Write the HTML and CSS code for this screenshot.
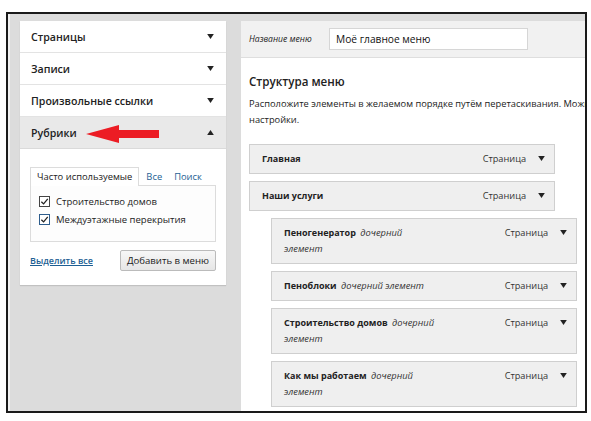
FILE: index.html
```html
<!DOCTYPE html>
<html lang="ru">
<head>
<meta charset="utf-8">
<link rel="stylesheet" href="styles.css">
</head>
<body>
<div class="frame">
  <div class="left">
    <div class="acc-row"><span>Страницы</span><svg class="tri" viewBox="0 0 8 6"><path d="M0 0H8L4 6Z"/></svg></div>
    <div class="acc-row"><span>Записи</span><svg class="tri" viewBox="0 0 8 6"><path d="M0 0H8L4 6Z"/></svg></div>
    <div class="acc-row"><span>Произвольные ссылки</span><svg class="tri" viewBox="0 0 8 6"><path d="M0 0H8L4 6Z"/></svg></div>
    <div class="acc-row open"><span>Рубрики</span><svg class="tri" viewBox="0 0 8 6"><path d="M0 6H8L4 0Z"/></svg>
      <svg class="red-arrow" viewBox="0 0 74 18"><path d="M0 9L33 0V5H73V13H33V18Z"/></svg>
    </div>
    <div class="acc-body">
      <div class="tabs">
        <span class="tab active">Часто используемые</span>
        <span class="tab">Все</span>
        <span class="tab">Поиск</span>
      </div>
      <div class="tab-panel">
        <label class="check"><span class="box"><svg viewBox="0 0 10 10"><path d="M1.5 5.2L4 7.6L8.6 2"/></svg></span>Строительство домов</label>
        <label class="check"><span class="box blue"><svg viewBox="0 0 10 10"><path d="M1.5 5.2L4 7.6L8.6 2"/></svg></span>Междуэтажные перекрытия</label>
      </div>
      <div class="actions">
        <a class="select-all">Выделить все</a>
        <span class="btn">Добавить в меню</span>
      </div>
    </div>
  </div>
  <div class="right">
    <div class="name-bar">
      <span class="name-label">Название меню</span>
      <span class="name-input">Моё главное меню</span>
    </div>
    <div class="structure">
      <h2>Структура меню</h2>
      <p>Расположите элементы в желаемом порядке путём перетаскивания. Можно также щёлкнуть на стрелку справа от элемента, чтобы открыть дополнительные<br>настройки.</p>
      <div class="items">
        <div class="item"><div class="title"><b>Главная</b></div><span class="type">Страница</span><svg class="tri" viewBox="0 0 8 6"><path d="M0 0H8L4 6Z"/></svg></div>
        <div class="item"><div class="title"><b>Наши услуги</b></div><span class="type">Страница</span><svg class="tri" viewBox="0 0 8 6"><path d="M0 0H8L4 6Z"/></svg></div>
        <div class="item child"><div class="title"><b>Пеногенератор</b> <i>дочерний<br>элемент</i></div><span class="type">Страница</span><svg class="tri" viewBox="0 0 8 6"><path d="M0 0H8L4 6Z"/></svg></div>
        <div class="item child"><div class="title"><b>Пеноблоки</b> <i>дочерний элемент</i></div><span class="type">Страница</span><svg class="tri" viewBox="0 0 8 6"><path d="M0 0H8L4 6Z"/></svg></div>
        <div class="item child"><div class="title"><b>Строительство домов</b> <i>дочерний<br>элемент</i></div><span class="type">Страница</span><svg class="tri" viewBox="0 0 8 6"><path d="M0 0H8L4 6Z"/></svg></div>
        <div class="item child"><div class="title"><b>Как мы работаем</b> <i>дочерний<br>элемент</i></div><span class="type">Страница</span><svg class="tri" viewBox="0 0 8 6"><path d="M0 0H8L4 6Z"/></svg></div>
      </div>
    </div>
  </div>
</div>
</body>
</html>
```
FILE: styles.css
```css
* { box-sizing: border-box; }
html, body { margin: 0; padding: 0; background: #fff; }
body {
  font-family: "Open Sans", "Noto Sans", sans-serif;
  color: #222;
  width: 591px;
  height: 421px;
  overflow: hidden;
}
.frame {
  margin: 12px 0 0 6px;
  width: 581px;
  height: 401px;
  border: 2px solid #1a1a1a;
  background: #dcdcdc;
  box-shadow: inset 2px 0 0 #f2f2f2;
  display: grid;
  grid-template-columns: 206px 1fr;
  column-gap: 15px;
  padding: 7px 0 0 12px;
  overflow: hidden;
}
.left {
  align-self: start;
  background: #fff;
  box-shadow: 0 1px 1px rgba(0,0,0,0.12);
}
.acc-row {
  position: relative;
  height: 32px;
  display: flex;
  align-items: center;
  justify-content: space-between;
  padding: 0 12px 0 11px;
  border-bottom: 1px solid #e3e3e3;
  font-size: 10.6px;
  font-weight: 600;
  color: #222;
}
.acc-row.open { background: #e9e9e9; border-bottom-color: #dadada; }
.tri { width: 7px; height: 5px; fill: #222; display: block; flex: none; }
.red-arrow {
  position: absolute;
  left: 66px;
  top: 8px;
  width: 74px;
  height: 18px;
  fill: #ec1c24;
}
.acc-body { padding: 18px 10px 14px 10px; }
.tabs { display: flex; align-items: flex-end; height: 18px; }
.tab {
  font-size: 9.4px;
  color: #1e5f94;
  padding: 0 6px;
  line-height: 17px;
  white-space: nowrap;
}
.tab.active {
  color: #222;
  background: #fff;
  border: 1px solid #dcdcdc;
  border-bottom: none;
  height: 19px;
  margin-bottom: -1px;
  margin-right: 1px;
  position: relative;
  z-index: 1;
  padding: 0 6px 0 6px;
}
.tab-panel {
  border: 1px solid #dcdcdc;
  background: #fdfdfd;
  height: 57px;
  padding: 10px 0 0 8px;
  display: flex;
  flex-direction: column;
  gap: 7px;
}
.check {
  display: flex;
  align-items: center;
  gap: 6px;
  font-size: 9.5px;
  color: #222;
  line-height: 11px;
  white-space: nowrap;
}
.box {
  width: 11px;
  height: 11px;
  border: 1px solid #444;
  background: #fff;
  display: block;
  flex: none;
}
.box.blue { border-color: #2e5d8c; }
.box svg { width: 9px; height: 9px; display: block; fill: none; stroke: #222; stroke-width: 1.4; }
.actions {
  display: flex;
  justify-content: space-between;
  align-items: center;
  margin-top: 8px;
}
.select-all {
  font-size: 9px;
  color: #1e5f94;
  text-decoration: underline;
  font-weight: 600;
  white-space: nowrap;
}
.btn {
  width: 96px;
  height: 21px;
  border: 1px solid #bbb;
  border-radius: 2px;
  background: linear-gradient(#f7f7f7, #e6e6e6);
  font-size: 9.6px;
  color: #222;
  display: flex;
  align-items: center;
  justify-content: center;
  white-space: nowrap;
}
.right {
  background: #fff;
  overflow: hidden;
  min-width: 0;
}
.name-bar {
  height: 37px;
  background: #f1f1f1;
  border-bottom: 1px solid #dedede;
  display: flex;
  align-items: center;
  padding-left: 8px;
}
.name-label { font-size: 8.6px; font-style: italic; color: #222; width: 80px; white-space: nowrap; }
.name-input {
  width: 199px;
  height: 22px;
  border: 1px solid #d6d6d6;
  background: #fff;
  font-size: 10.2px;
  padding-left: 6px;
  display: flex;
  align-items: center;
  color: #111;
  white-space: nowrap;
}
.structure { padding: 15px 0 0 8px; }
h2 {
  margin: 0;
  font-size: 11.6px;
  font-weight: 600;
  line-height: 18px;
  color: #222;
}
p {
  margin: 5px 0 0 0;
  font-size: 9.3px;
  line-height: 16px;
  white-space: nowrap;
  color: #222;
}
.items {
  margin-top: 16px;
  display: flex;
  flex-direction: column;
  gap: 7px;
}
.item {
  width: 306px;
  background: #efefef;
  border: 1px solid #cfcfcf;
  display: flex;
  align-items: flex-start;
  padding: 6px 9px 6px 12px;
  font-size: 9.3px;
  line-height: 16px;
}
.item.child { margin-left: 22px; }
.item .title { flex: 1; line-height: 16px; white-space: nowrap; }
.item .title b { font-weight: 700; font-size: 9px; }
.item .title i { font-style: italic; color: #333; margin-left: 2px; font-size: 9.3px; }
.item .type { margin-left: auto; color: #333; font-size: 9.2px; white-space: nowrap; }
.item .tri { margin: 5px 0 0 12px; }
```
